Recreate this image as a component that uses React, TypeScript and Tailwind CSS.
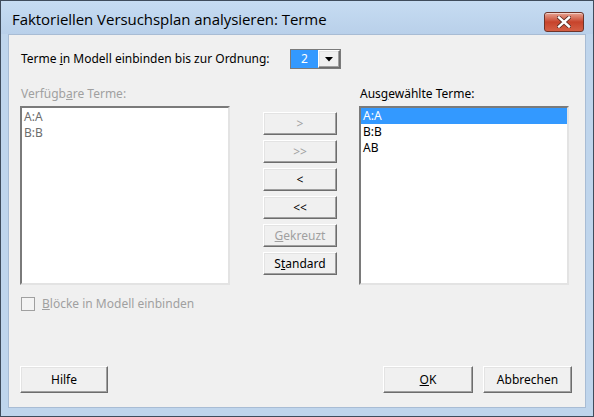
import React from "react";

const btn3d =
  "border border-t-[#ffffff] border-l-[#ffffff] border-b-[#6d6d6d] border-r-[#6d6d6d] shadow-[inset_-1px_-1px_0_#a0a0a0,inset_1px_1px_0_#e3e3e3] bg-[#f0f0f0] flex items-center justify-center";

function SmallBtn({ children, disabled }: { children: React.ReactNode; disabled?: boolean }) {
  return (
    <div className={`${btn3d} w-[74px] h-[23px] ${disabled ? "text-[#a0a0a0]" : "text-black"}`}>
      {children}
    </div>
  );
}

function BigBtn({ children, w }: { children: React.ReactNode; w: string }) {
  return <div className={`${btn3d} ${w} h-[27px] text-black`}>{children}</div>;
}

export default function App() {
  return (
    <div className="w-[594px] h-[417px] flex flex-col border border-[#3f4c5c] bg-[#bfd5ec] font-['Noto_Sans',sans-serif] text-[12px] leading-[16px] text-black">
      {/* Title bar */}
      <div className="h-[33px] flex items-center justify-between pl-[11px] pr-[9px] bg-gradient-to-b from-[#c6dcf2] to-[#b9d0ea]">
        <span className="text-[15px] font-['Open_Sans',sans-serif] tracking-[-0.05px] pt-[2px]">
          Faktoriellen Versuchsplan analysieren: Terme
        </span>
        <div className="w-[40px] h-[20px] mt-[8px] rounded-[3px] border border-[#6e3429] bg-gradient-to-b from-[#e6a292] via-[#c7432b] to-[#d45f45] flex items-center justify-center shadow-[inset_0_1px_0_rgba(255,255,255,0.5)]">
          <svg width="14" height="12" viewBox="0 0 14 12">
            <path d="M2 1.5 L12 10.5 M12 1.5 L2 10.5" stroke="#5a2a22" strokeWidth="4" strokeLinecap="square" />
            <path d="M2 1.5 L12 10.5 M12 1.5 L2 10.5" stroke="#ffffff" strokeWidth="2.4" strokeLinecap="square" />
          </svg>
        </div>
      </div>

      {/* Content */}
      <div className="flex-1 mx-[7px] mb-[8px] bg-[#f0f0f0] border border-[#a8bcd4] flex flex-col pl-[11px] pr-[13px] pt-[14px] pb-[14px]">
        {/* Row 1 */}
        <div className="flex items-center h-[20px]">
          <span className="w-[270px] pl-[1px]">
            Terme <span className="underline">i</span>n Modell einbinden bis zur Ordnung:
          </span>
          <div className="w-[51px] h-[20px] border border-[#7a7a7a] flex bg-white">
            <div className="w-[27px] bg-[#3399ff] text-white flex items-center justify-center">2</div>
            <div className={`${btn3d} flex-1`}>
              <svg width="8" height="5" viewBox="0 0 8 5">
                <path d="M0 0 H8 L4 4.5 Z" fill="#000" />
              </svg>
            </div>
          </div>
        </div>

        {/* Lists row */}
        <div className="flex mt-[17px]">
          <div className="flex flex-col w-[210px]">
            <span className="h-[20px] pl-[1px] text-[#a0a0a0]">
              Verfügb<span className="underline">a</span>re Terme:
            </span>
            <div className="h-[179px] border-2 border-t-[#7a7a7a] border-l-[#7a7a7a] border-b-[#e3e3e3] border-r-[#e3e3e3] bg-white pt-[1px] pl-[2px] text-[#6d6d6d]">
              <div>A:A</div>
              <div>B:B</div>
            </div>
          </div>

          <div className="flex flex-col gap-[5px] ml-[33px] mt-[26px]">
            <SmallBtn disabled>&gt;</SmallBtn>
            <SmallBtn disabled>&gt;&gt;</SmallBtn>
            <SmallBtn>&lt;</SmallBtn>
            <SmallBtn>&lt;&lt;</SmallBtn>
            <SmallBtn disabled>
              <span>
                <span className="underline">G</span>ekreuzt
              </span>
            </SmallBtn>
            <SmallBtn>
              <span>
                S<span className="underline">t</span>andard
              </span>
            </SmallBtn>
          </div>

          <div className="flex flex-col w-[210px] ml-[22px]">
            <span className="h-[20px] pl-[1px]">
              Aus<span className="underline">g</span>ewählte Terme:
            </span>
            <div className="h-[179px] border-2 border-t-[#7a7a7a] border-l-[#7a7a7a] border-b-[#e3e3e3] border-r-[#e3e3e3] bg-white">
              <div className="bg-[#3399ff] text-white pl-[2px]">A:A</div>
              <div className="pl-[2px]">B:B</div>
              <div className="pl-[2px]">AB</div>
            </div>
          </div>
        </div>

        {/* Checkbox */}
        <div className="flex items-center mt-[11px] text-[#a0a0a0]">
          <div className="w-[14px] h-[14px] border border-[#a0a0a0] bg-[#f4f4f4] ml-[1px]" />
          <span className="ml-[7px]">
            <span className="underline">B</span>löcke in Modell einbinden
          </span>
        </div>

        {/* Bottom buttons */}
        <div className="flex justify-between items-end mt-auto">
          <BigBtn w="w-[88px]">Hilfe</BigBtn>
          <div className="flex gap-[10px]">
            <BigBtn w="w-[90px]">
              <span>
                <span className="underline">O</span>K
              </span>
            </BigBtn>
            <BigBtn w="w-[89px]">Abbrechen</BigBtn>
          </div>
        </div>
      </div>
    </div>
  );
}
